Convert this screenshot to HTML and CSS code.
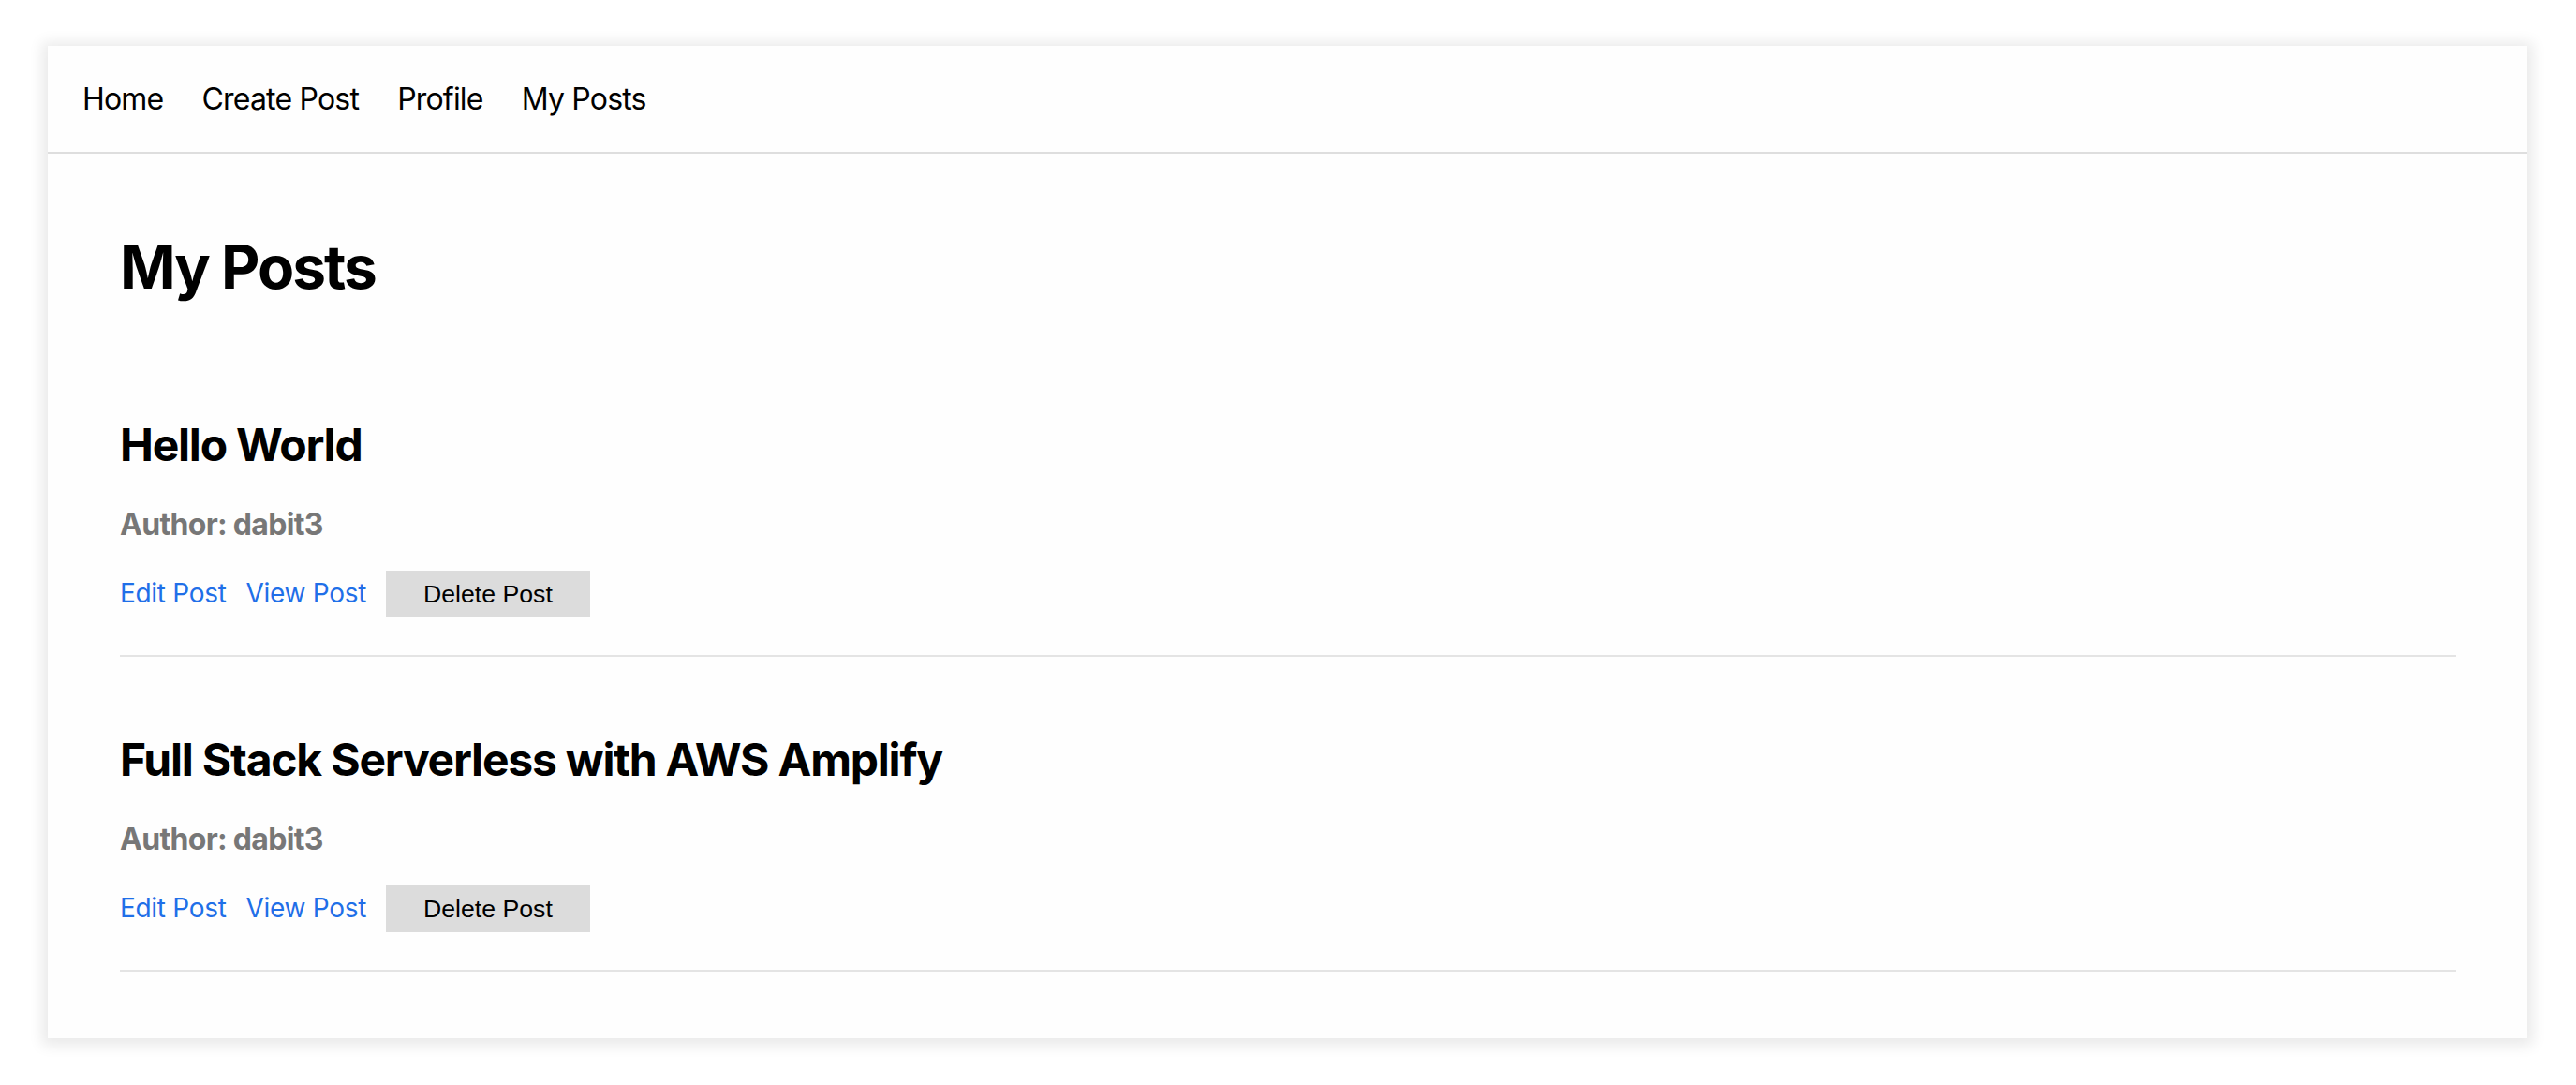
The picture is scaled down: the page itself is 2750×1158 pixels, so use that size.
FILE: index.html
```html
<!DOCTYPE html>
<html lang="en">
<head>
<meta charset="utf-8">
<title>My Posts</title>
<link rel="stylesheet" href="styles.css">
</head>
<body>
<div class="page">
  <div class="card">
    <nav class="nav">
      <a class="nav-link" href="#">Home</a>
      <a class="nav-link" href="#">Create Post</a>
      <a class="nav-link" href="#">Profile</a>
      <a class="nav-link" href="#">My Posts</a>
    </nav>
    <main class="content">
      <h1 class="page-title">My Posts</h1>
      <div class="post">
        <h2 class="post-title">Hello World</h2>
        <p class="post-author">Author: dabit3</p>
        <div class="post-actions">
          <a class="action-link" href="#">Edit Post</a>
          <a class="action-link" href="#">View Post</a>
          <button class="delete-btn" type="button">Delete Post</button>
        </div>
      </div>
      <div class="post">
        <h2 class="post-title">Full Stack Serverless with AWS Amplify</h2>
        <p class="post-author">Author: dabit3</p>
        <div class="post-actions">
          <a class="action-link" href="#">Edit Post</a>
          <a class="action-link" href="#">View Post</a>
          <button class="delete-btn" type="button">Delete Post</button>
        </div>
      </div>
    </main>
  </div>
</div>
</body>
</html>
```
FILE: styles.css
```css
html, body {
  margin: 0;
  padding: 0;
  background: #ffffff;
}

body {
  font-family: Inter, "Noto Sans", "Liberation Sans", sans-serif;
  color: #000;
}

.page {
  padding: 49px 52px 50px 51px;
}

.card {
  background: #fefefe;
  box-shadow: 0 2px 14px 6px rgba(0, 0, 0, 0.085);
}

.nav {
  height: 113px;
  display: flex;
  align-items: center;
  padding: 0 37px;
  border-bottom: 2px solid #dedede;
}

.nav-link {
  font-size: 32px;
  line-height: 38px;
  color: #000;
  text-decoration: none;
  margin-right: 41px;
  letter-spacing: -0.8px;
}

.content {
  padding: 0 76px 71px 77px;
}

.page-title {
  margin: 82px 0 122px;
  font-size: 64px;
  line-height: 78px;
  font-weight: 700;
  letter-spacing: -2px;
}

.post {
  border-bottom: 2px solid #e4e4e4;
  padding-bottom: 40px;
}

.post-title {
  margin: 81px 0 0;
  font-size: 48px;
  line-height: 58px;
  font-weight: 700;
  letter-spacing: -1.2px;
}

.post-author {
  margin: 36px 0 0;
  font-size: 32px;
  line-height: 39px;
  font-weight: 700;
  color: #777777;
  letter-spacing: -0.7px;
}

.post-actions {
  margin-top: 30px;
  display: flex;
  align-items: baseline;
}

.action-link {
  font-size: 28px;
  color: #1f6fe8;
  text-decoration: none;
  margin-right: 21px;
  letter-spacing: -0.3px;
}

.delete-btn {
  font-family: "Liberation Sans", Arial, sans-serif;
  font-size: 26.67px;
  line-height: 30px;
  padding: 10px 40px;
  border: none;
  background: #dcdcdc;
  color: #000;
  cursor: pointer;
}
```
